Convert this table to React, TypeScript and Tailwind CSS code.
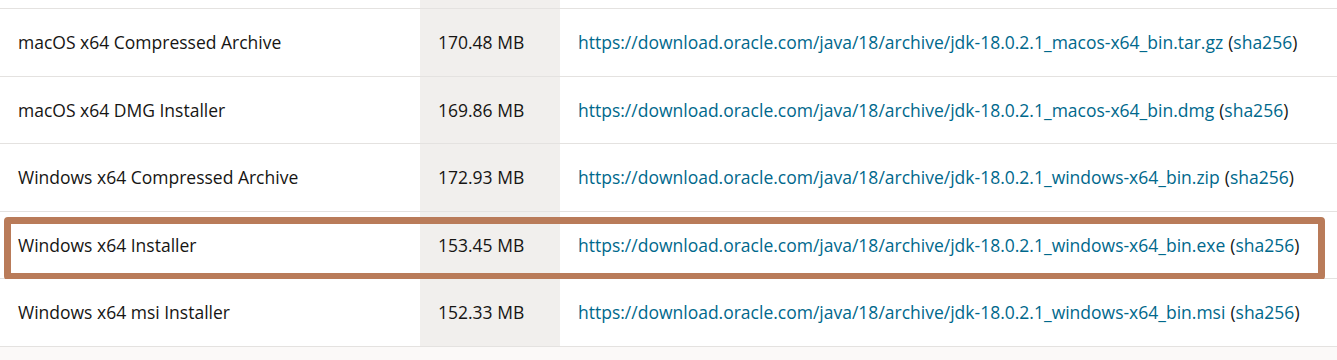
import React from "react";

const rows = [
  { name: "macOS x64 Compressed Archive", size: "170.48 MB", file: "jdk-18.0.2.1_macos-x64_bin.tar.gz" },
  { name: "macOS x64 DMG Installer", size: "169.86 MB", file: "jdk-18.0.2.1_macos-x64_bin.dmg" },
  { name: "Windows x64 Compressed Archive", size: "172.93 MB", file: "jdk-18.0.2.1_windows-x64_bin.zip" },
  { name: "Windows x64 Installer", size: "153.45 MB", file: "jdk-18.0.2.1_windows-x64_bin.exe", hl: true },
  { name: "Windows x64 msi Installer", size: "152.33 MB", file: "jdk-18.0.2.1_windows-x64_bin.msi" },
];

export default function App() {
  return (
    <div
      className="w-[1337px] h-[360px] bg-[#fbf9f8] overflow-hidden text-[17.5px] text-[#161513]"
      style={{ fontFamily: '"Open Sans", "Noto Sans", sans-serif' }}
    >
      <div className="flex h-[9px] bg-white border-b border-[#e4e2e0]">
        <div className="w-[420px]" />
        <div className="w-[140px] bg-[#f1efed]" />
        <div className="flex-1" />
      </div>
      {rows.map((r) => (
        <div key={r.name} className="relative flex h-[67.5px] bg-white border-b border-[#e4e2e0] items-stretch">
          <div className="w-[420px] pl-[18px] flex items-center">{r.name}</div>
          <div className="w-[140px] pl-[18px] bg-[#f1efed] flex items-center">{r.size}</div>
          <div className="flex-1 pl-[18px] flex items-center whitespace-nowrap">
            <span className="text-[#00688c]">https://download.oracle.com/java/18/archive/{r.file}</span>
            <span className="ml-[5px]">(</span>
            <span className="text-[#00688c]">sha256</span>
            <span>)</span>
          </div>
          {r.hl && (
            <div className="absolute left-[4px] top-[5px] w-[1321px] h-[63px] border-[7px] border-[#b97b59] rounded-[4px] pointer-events-none" />
          )}
        </div>
      ))}
    </div>
  );
}
